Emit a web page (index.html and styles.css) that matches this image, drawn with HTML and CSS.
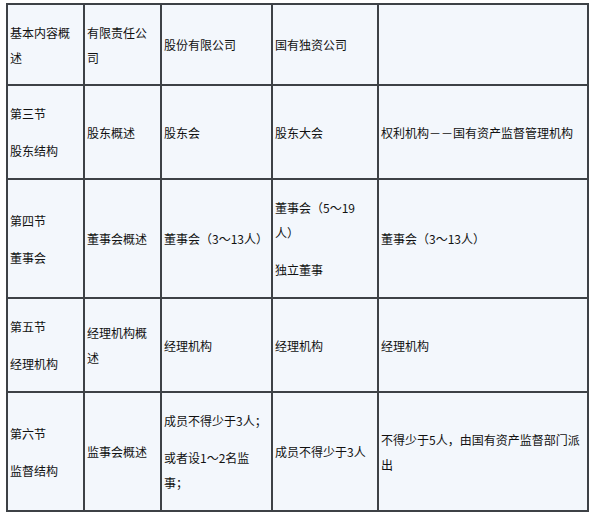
FILE: index.html
```html
<!DOCTYPE html>
<html lang="zh-CN">
<head>
<meta charset="utf-8">
<title>公司结构</title>
<link rel="stylesheet" href="styles.css">
</head>
<body>
<table class="grid">
  <tr class="r1">
    <td class="c1"><p>基本内容概述</p></td>
    <td class="c2"><p>有限责任公司</p></td>
    <td class="c3"><p>股份有限公司</p></td>
    <td class="c4"><p>国有独资公司</p></td>
    <td class="c5"></td>
  </tr>
  <tr class="r2">
    <td><p>第三节</p><p>股东结构</p></td>
    <td><p>股东概述</p></td>
    <td><p>股东会</p></td>
    <td><p>股东大会</p></td>
    <td><p>权利机构－－国有资产监督管理机构</p></td>
  </tr>
  <tr class="r3">
    <td><p>第四节</p><p>董事会</p></td>
    <td><p>董事会概述</p></td>
    <td><p>董事会（3～13人）</p></td>
    <td><p>董事会（5～19<br>人）</p><p>独立董事</p></td>
    <td><p>董事会（3～13人）</p></td>
  </tr>
  <tr class="r4">
    <td><p>第五节</p><p>经理机构</p></td>
    <td><p>经理机构概述</p></td>
    <td><p>经理机构</p></td>
    <td><p>经理机构</p></td>
    <td><p>经理机构</p></td>
  </tr>
  <tr class="r5">
    <td><p>第六节</p><p>监督结构</p></td>
    <td><p>监事会概述</p></td>
    <td><p>成员不得少于3人；</p><p>或者设1～2名监事；</p></td>
    <td><p>成员不得少于3人</p></td>
    <td><p>不得少于5人，由国有资产监督部门派出</p></td>
  </tr>
</table>
</body>
</html>
```

FILE: styles.css
```css
html, body {
  margin: 0;
  padding: 0;
  background: #ffffff;
}

body {
  padding: 3px 0 0 6px;
  font-family: "Noto Sans CJK SC", "Noto Sans", sans-serif;
  font-size: 12px;
  color: #111111;
}

.grid {
  box-sizing: border-box;
  table-layout: fixed;
  width: 583px;
  border-collapse: separate;
  border-spacing: 0;
  border-left: 2px solid #3d4146;
  border-top: 2px solid #3d4146;
  background: #f3f7fc;
}

.grid td {
  box-sizing: border-box;
  border-right: 2px solid #3d4146;
  border-bottom: 2px solid #3d4146;
  padding: 0 2px;
  vertical-align: middle;
  line-height: 25px;
}

.grid p {
  margin: 0;
}

.grid p + p {
  margin-top: 12px;
}

.c1 { width: 77px; }
.c2 { width: 77px; }
.c3 { width: 111px; }
.c4 { width: 106px; }
.c5 { width: 210px; }

.r1 td { height: 81px; }
.r2 td { height: 94px; }
.r3 td { height: 119px; }
.r4 td { height: 94px; }
.r5 td { height: 119px; }
```
